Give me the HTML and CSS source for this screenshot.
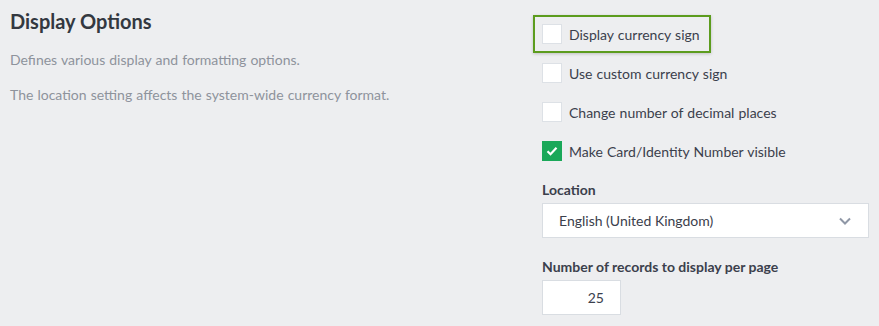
FILE: index.html
```html
<!DOCTYPE html>
<html lang="en">
<head>
    <meta charset="UTF-8">
    <title>Display Options</title>
    <link rel="stylesheet" href="styles.css">
</head>
<body>
    <div class="section">
        <div class="intro">
            <h2>Display Options</h2>
            <p>Defines various display and formatting options.</p>
            <p>The location setting affects the system-wide currency format.</p>
        </div>
        <div class="fields">
            <label class="check focused"><span class="box"></span>Display currency sign</label>
            <label class="check"><span class="box"></span>Use custom currency sign</label>
            <label class="check"><span class="box"></span>Change number of decimal places</label>
            <label class="check"><span class="box checked">
                <svg width="12" height="10" viewBox="0 0 12 10"><path d="M1.5 5.2l3 3 6-6.5" fill="none" stroke="#fff" stroke-width="2.2"/></svg>
            </span>Make Card/Identity Number visible</label>

            <div class="field">
                <div class="field-label">Location</div>
                <div class="select">
                    <span>English (United Kingdom)</span>
                    <svg width="12" height="8" viewBox="0 0 12 8"><path d="M1 1.5l5 5 5-5" fill="none" stroke="#8f97a6" stroke-width="2"/></svg>
                </div>
            </div>

            <div class="field">
                <div class="field-label">Number of records to display per page</div>
                <div class="number">25</div>
            </div>
        </div>
    </div>
</body>
</html>
```

FILE: styles.css
```css
body {
    margin: 0;
    background: #edeef0;
    font-family: Lato, "Open Sans", sans-serif;
    color: #3b404c;
}
.section {
    display: flex;
    height: 326px;
}
.intro {
    flex-shrink: 0;
    width: 523px;
    padding-left: 10px;
}
h2 {
    margin: 9px 0 0;
    font-size: 20px;
    line-height: 24px;
    font-weight: 700;
    color: #333840;
}
.intro p {
    margin: 19px 0 0;
    font-size: 14px;
    line-height: 16px;
    color: #8e939c;
    word-spacing: 0.5px;
}
.fields {
    display: flex;
    flex-direction: column;
    align-items: flex-start;
    padding-top: 15px;
}
.check {
    display: flex;
    align-items: center;
    gap: 7px;
    padding: 7px 9px 7px 7px;
    border: 2px solid transparent;
    margin-bottom: 1px;
    font-size: 14px;
    word-spacing: 0.5px;
}
.check.focused {
    border-color: #5c9c1e;
    box-shadow: 0 1px 3px rgba(0,0,0,0.2);
}
.box {
    width: 18px;
    height: 18px;
    background: #fff;
    border: 1px solid #dde1e6;
    display: flex;
    align-items: center;
    justify-content: center;
}
.box.checked {
    background: #1aa859;
    border-color: #1aa859;
}
.field {
    margin-left: 9px;
    margin-top: 10px;
}
.field-label {
    font-size: 14px;
    font-weight: 700;
    color: #3b404c;
    line-height: 18px;
    margin-bottom: 4px;
}
.select {
    width: 292px;
    height: 33px;
    background: #fff;
    border: 1px solid #d9dde2;
    display: flex;
    align-items: center;
    justify-content: space-between;
    padding: 0 17px 0 16px;
    font-size: 14px;
}
.number {
    width: 61px;
    height: 33px;
    background: #fff;
    border: 1px solid #d9dde2;
    line-height: 33px;
    text-align: right;
    padding-right: 16px;
    font-size: 14px;
}
.fields .field + .field {
    margin-top: 20px;
}
```
